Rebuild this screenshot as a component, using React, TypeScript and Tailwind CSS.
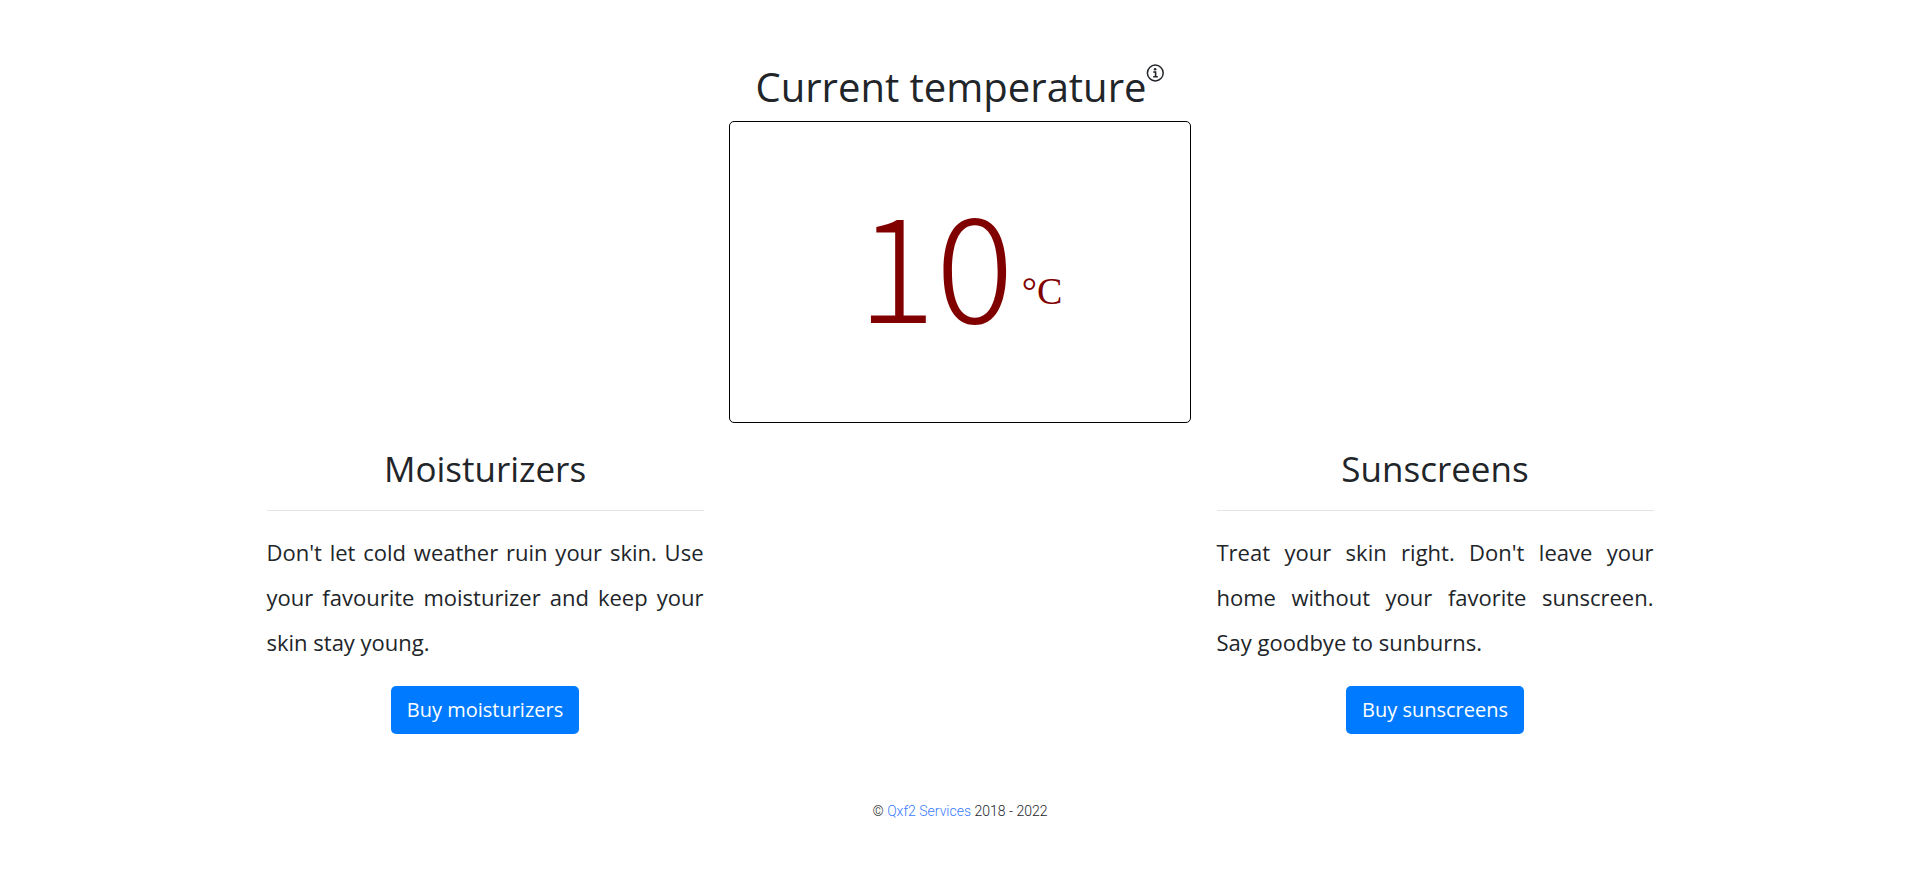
type Product = { title: string; text: string; action: string };

const moisturizers: Product = {
  title: "Moisturizers",
  text: "Don't let cold weather ruin your skin. Use your favourite moisturizer and keep your skin stay young.",
  action: "Buy moisturizers",
};

const sunscreens: Product = {
  title: "Sunscreens",
  text: "Treat your skin right. Don't leave your home without your favorite sunscreen. Say goodbye to sunburns.",
  action: "Buy sunscreens",
};

function InfoIcon() {
  return (
    <svg viewBox="0 0 18 18" className="size-[18px]" fill="none" stroke="currentColor" aria-hidden="true">
      <circle cx="9.3" cy="9" r="7.9" strokeWidth="1.5" />
      <circle cx="9.1" cy="5.3" r="1.3" fill="currentColor" stroke="none" />
      <path d="M7.2 8h2.4v4.4M7.2 12.7h4.6" strokeWidth="1.6" />
    </svg>
  );
}

function ProductColumn({ title, text, action }: Product) {
  return (
    <section className="flex flex-col items-center px-[19px]">
      <h2 className="text-[35px] leading-[42px]">{title}</h2>
      <hr className="mt-5 w-full border-[#e5e5e5]" />
      <p className="mt-[19px] w-full text-justify text-[22px] leading-[45px]">{text}</p>
      <button type="button" className="mt-[21px] h-12 rounded-[5px] bg-[#007bff] px-4 text-xl text-white">
        {action}
      </button>
    </section>
  );
}

export default function App() {
  return (
    <div className="bg-white pt-[63px] font-['Open_Sans',sans-serif] text-[#212529]">
      <main className="mx-auto max-w-[1425px]">
        <div className="flex flex-col items-center">
          <h1 className="flex items-start text-[40px] leading-[48px]">
            Current temperature
            <button type="button" aria-label="About the temperature" className="pt-px">
              <InfoIcon />
            </button>
          </h1>
          <div className="mt-2.5 flex h-[302px] w-full max-w-[462px] items-center justify-center rounded-[5px] border border-black pb-6 text-[#800000]">
            <p className="font-['Noto_Sans_CJK_SC',sans-serif] text-[146px] leading-none font-light">
              10
              <span className="ml-2 align-[19px] font-['Liberation_Serif',serif] text-[38px] leading-none font-normal">°C</span>
            </p>
          </div>
        </div>
        <div className="mt-[25px] grid grid-cols-3">
          <ProductColumn {...moisturizers} />
          <div />
          <ProductColumn {...sunscreens} />
        </div>
      </main>
      <footer className="mt-[65px] pb-16 text-center font-['Roboto',sans-serif] text-[14px] leading-6 font-light">
        © <a href="#services" className="text-[#3b7cff]">Qxf2 Services</a> 2018 - 2022
      </footer>
    </div>
  );
}
